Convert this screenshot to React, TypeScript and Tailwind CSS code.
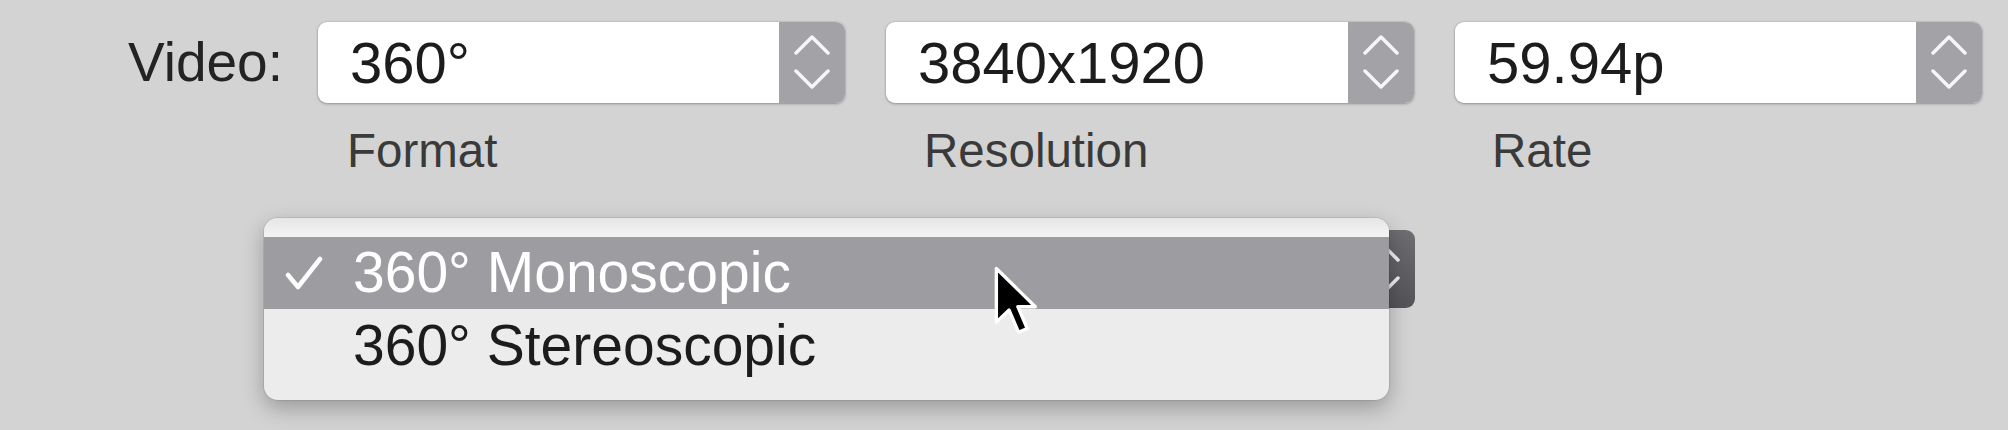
import React from 'react';

const Stepper: React.FC<{ pressed?: boolean }> = ({ pressed }) => (
  <div
    className={
      pressed
        ? 'w-[66px] h-full rounded-r-[9px] bg-gradient-to-b from-[#6e6e72] to-[#545458] flex items-center justify-center'
        : 'w-[66px] h-full rounded-r-[9px] bg-[#a3a3a7] flex items-center justify-center'
    }
  >
    <svg width="36" height="54" viewBox="0 0 36 54" fill="none">
      <polyline points="2,18 18,2 34,18" stroke="white" strokeWidth="3.5" strokeLinecap="round" strokeLinejoin="round" opacity="0.9" />
      <polyline points="2,36 18,52 34,36" stroke="white" strokeWidth="3.5" strokeLinecap="round" strokeLinejoin="round" opacity="0.9" />
    </svg>
  </div>
);

const PopUp: React.FC<{ value: string; width: string }> = ({ value, width }) => (
  <div className={`${width} h-[81px] flex rounded-[9px] bg-white shadow-[0_1px_3px_rgba(0,0,0,0.28),0_0_0_1px_rgba(0,0,0,0.05)]`}>
    <div className="flex-1 flex items-center pl-[32px] text-[58px] text-[#1c1c1c]">{value}</div>
    <Stepper />
  </div>
);

const App: React.FC = () => {
  return (
    <div className="relative w-[2008px] h-[430px] overflow-hidden bg-[#d3d3d3] font-['Liberation_Sans',Arial,sans-serif]">
      <div className="pt-[21px] pl-[128px]">
        {/* video row */}
        <div className="flex items-center">
          <div className="w-[190px] text-[55px] text-[#232323]">Video:</div>
          <PopUp value="360°" width="w-[527px]" />
          <div className="w-[41px]" />
          <PopUp value="3840x1920" width="w-[528px]" />
          <div className="w-[41px]" />
          <PopUp value="59.94p" width="w-[527px]" />
        </div>

        {/* captions */}
        <div className="flex mt-[24px] h-[46px] leading-[46px] text-[47.5px] text-[#3a3a3a]">
          <div className="w-[758px] pl-[219px]">Format</div>
          <div className="w-[569px] pl-[38px]">Resolution</div>
          <div className="pl-[37px]">Rate</div>
        </div>

        {/* pressed popup under the menu */}
        <div className="ml-[190px] mt-[56px] w-[1097px] h-[78px] flex rounded-[9px] bg-white">
          <div className="flex-1" />
          <Stepper pressed />
        </div>
      </div>

      {/* open menu */}
      <div className="absolute left-[264px] top-[218px] w-[1125px] h-[182px] rounded-[14px] bg-[#ececec] shadow-[0_8px_22px_rgba(0,0,0,0.28),0_0_0_1px_rgba(0,0,0,0.08)] overflow-hidden">
        <div className="h-[19px] bg-gradient-to-b from-[#e6e6e6] to-[#f4f4f4]" />
        <div className="h-[72px] bg-[#9c9ca1] flex items-center text-white text-[57px]">
          <svg className="ml-[21px] mr-[30px]" width="38" height="36" viewBox="0 0 38 36" fill="none">
            <polyline points="3,20 13,32 35,4" stroke="white" strokeWidth="4.5" strokeLinecap="round" strokeLinejoin="round" />
          </svg>
          <span>360° Monoscopic</span>
        </div>
        <div className="h-[73px] flex items-center pl-[89px] text-[57px] text-[#1c1c1c]">360° Stereoscopic</div>
      </div>

      {/* mouse pointer */}
      <svg className="absolute left-[993px] top-[265px]" width="47" height="74" viewBox="0 0 14 22">
        <path d="M1 1 L1 17 L4.8 13.4 L7.6 20 L10.2 18.9 L7.4 12.4 L12.6 12.4 Z" fill="black" stroke="white" strokeWidth="1" strokeLinejoin="round" />
      </svg>
    </div>
  );
};

export default App;
